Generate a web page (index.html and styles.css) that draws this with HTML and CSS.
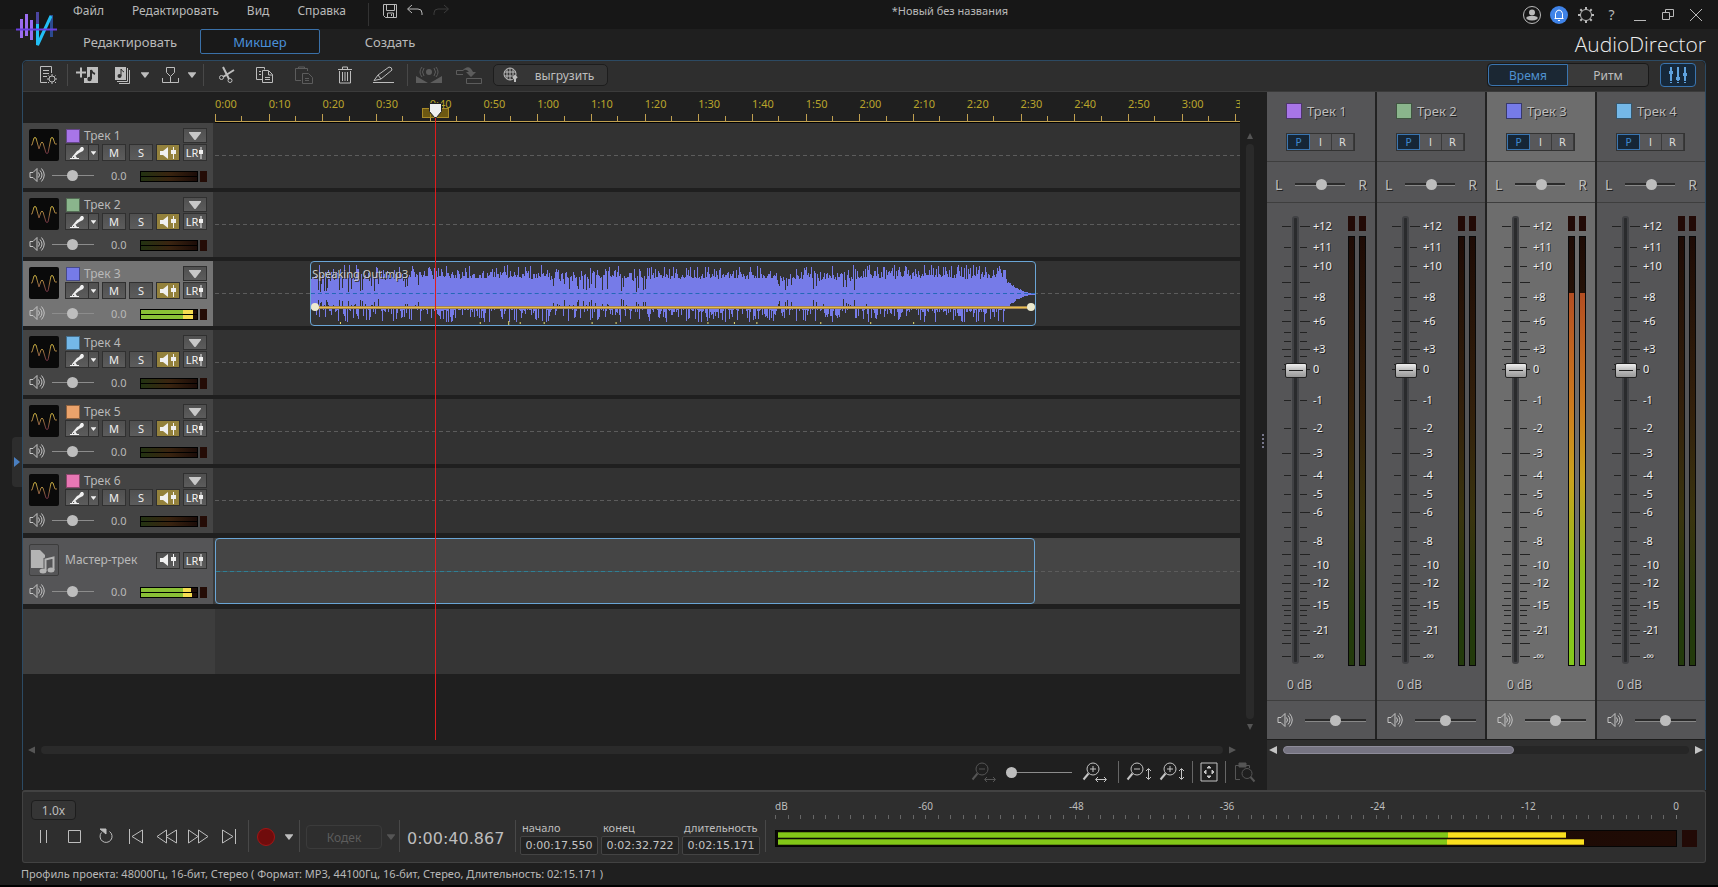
FILE: index.html
```html
<!DOCTYPE html>
<html lang="ru">
<head>
    <meta charset="UTF-8">
    <title>AudioDirector</title>
    <link rel="stylesheet" href="styles.css">
</head>
<body>
<svg class="sprite" aria-hidden="true">
    <symbol id="i-speaker" viewBox="0 0 16 16"><path d="M1 5.500h3l4-4v13l-4-4H1z M9.500 5.500q2 2.500 0 5 M11 3.500q4 4.500 0 9 M12.500 1.500q5.500 6.500 0 13"/></symbol>
    <symbol id="i-mic" viewBox="0 0 16 14"><path d="M1 12.500h9M3 12l5-5" /><path d="M8 5l2-1 2-3h2l1 2-1 2-4 2-5 4-2 0z M6 9l2 3H5z" fill="currentColor" stroke="none"/></symbol>
    <symbol id="i-fx" viewBox="0 0 18 14"><path d="M1 5h3l5-4v12L4 9H1z" fill="currentColor" stroke="none"/><path d="M14.500 1v12" stroke-width="1"/><path d="M12 4h5v4h-5z" fill="currentColor" stroke="none"/></symbol>
    <symbol id="i-knob" viewBox="0 0 6 14"><path d="M3 1v12"/><path d="M1 4h4v4H1z" fill="currentColor" stroke="none"/></symbol>
    <symbol id="i-down" viewBox="0 0 12 8"><path d="M0 0h12v1L6.500 8h-1L0 1z" fill="currentColor" stroke="none"/></symbol>
    <symbol id="i-left" viewBox="0 0 8 8"><path d="M8 0v8L0 4z" fill="currentColor" stroke="none"/></symbol>
    <symbol id="i-right" viewBox="0 0 8 8"><path d="M0 0v8l8-4z" fill="currentColor" stroke="none"/></symbol>
    <symbol id="i-up" viewBox="0 0 8 8"><path d="M0 8h8L4 0z" fill="currentColor" stroke="none"/></symbol>
    <symbol id="i-lens" viewBox="0 0 26 20"><circle cx="11" cy="7" r="6"/><path d="M6.500 11.500l-5 6" stroke-width="2"/></symbol>
</svg>

<header class="titlebar">
    <nav class="menu">
        <a href="#">Файл</a>
        <a href="#">Редактировать</a>
        <a href="#">Вид</a>
        <a href="#">Справка</a>
    </nav>
    <div class="quick">
        <button title="Сохранить" class="save"><svg width="16" height="16"><path d="M1.500 1.500h13v13h-11l-2-2z M4.500 1.500v6h8v-6 M5.500 14v-4h6v4 M9.500 11v2"/></svg></button>
        <button title="Отменить"><svg width="18" height="14"><path d="M6 1L1.500 5 6 9 M2 5h10q4 0 4 4v2"/></svg></button>
        <button title="Повторить" class="dim"><svg width="18" height="14"><path d="M12 1l4.500 4L12 9 M16 5H6q-4 0-4 4v2"/></svg></button>
    </div>
    <div class="doc-title">*Новый без названия</div>
    <div class="window-tools">
        <button title="Профиль"><svg width="20" height="20"><circle cx="10" cy="10" r="8.500"/><path d="M4.500 14v-2l3-1h5l3 1v2q-5.500 3-11 0z" fill="currentColor" stroke="none"/><circle cx="10" cy="7.500" r="3" fill="currentColor" stroke="none"/></svg></button>
        <button title="Уведомления"><svg width="20" height="20"><circle cx="10" cy="10" r="9" fill="#3f83e8" stroke="none"/><path d="M5.500 13.500h9M6.500 13V8.500q.5-3 3.500-3.500 3 .5 3.500 3.500V13M9 15.500h2" stroke="#fff"/></svg></button>
        <button title="Настройки"><svg width="18" height="18"><circle cx="9" cy="9" r="5.500"/><path d="M9 1v2.500M9 14.500V17M1 9h2.500M14.500 9H17M3.300 3.300L5 5M13 13l1.700 1.700M14.700 3.300L13 5M5 13l-1.700 1.700" stroke-width="2"/></svg></button>
        <button title="Помощь" class="help">?</button>
        <button title="Свернуть"><svg width="14" height="14"><path d="M1 12.500h12"/></svg></button>
        <button title="Окно"><svg width="14" height="14"><path d="M1.500 4.500h7v7h-7z M4.500 4V1.500h8v7H9"/></svg></button>
        <button title="Закрыть"><svg width="14" height="14"><path d="M1 1l12 12M13 1L1 13"/></svg></button>
    </div>
</header>

<div class="modes">
    <svg class="logo" width="42" height="36" viewBox="0 0 42 36">
        <path d="M5.500 7v19M10.500 2v22M15.500 8v20" stroke="#9a6cf0" stroke-width="3"/>
        <path d="M21.500 0v12" stroke="#4b45a0" stroke-width="3"/><path d="M35.500 3v22" stroke="#2c4a90" stroke-width="3"/>
        <path d="M21.500 12v21L35 4" stroke="#22bff5" stroke-width="3"/>
        <path d="M0 17.500h41" stroke="#6a3fe0" stroke-width="2"/>
    </svg>
    <button class="mode">Редактировать</button>
    <button class="mode active">Микшер</button>
    <button class="mode">Создать</button>
    <div class="brand">AudioDirector</div>
</div>

<div class="workspace">
    <button class="side-tab" title="Показать панель"><svg width="6" height="10" viewBox="0 0 6 10"><path d="M0 0v10l6-5z" fill="#4a7fc0" stroke="none"/></svg></button>
    <div class="shell">
        <div class="toolbar">
            <button title="Параметры"><svg width="20" height="20"><path d="M9 17.500H2.500v-16h11V8M5 5.500h6M5 8.500h6M5 11.500h4"/><circle cx="14" cy="14" r="3"/><path d="M14 9v2M14 17v2M9 14h2M17 14h2M10.500 10.500l1 1M17 17l1 1M17.500 10.500l-1 1M11 17l-1 1"/></svg></button>
            <i class="sep"></i>
            <button title="Добавить"><svg width="24" height="18"><path d="M1 6.500h10M6 1.500v10" stroke-width="2"/><path d="M12 1h11v16H9v-5h3z" fill="currentColor" stroke="none"/><path d="M16 13V4q1 3 4 4" stroke="#2e2e2e" stroke-width="2"/><circle cx="14.500" cy="13" r="2.200" fill="#2e2e2e" stroke="none"/></svg></button>
            <button title="Библиотека" class="library"><svg width="17" height="18"><path d="M1 1h11v13H1z" fill="currentColor" stroke="none"/><path d="M3 15.500h10.500V2M5 17.500h10.500V4"/><path d="M7 10V3q1 2 3 3" stroke="#2e2e2e"/><circle cx="5.500" cy="10" r="2" fill="#2e2e2e" stroke="none"/></svg></button>
            <button title="Список" class="caret"><svg width="8" height="6"><use href="#i-down"/></svg></button>
            <button title="Маркер"><svg width="20" height="18"><path d="M5.500 1.500h8v5l-4 4-4-4z M9.500 11v5M1.500 12v4.500h16V12"/></svg></button>
            <button title="Список" class="caret"><svg width="8" height="6"><use href="#i-down"/></svg></button>
            <i class="sep"></i>
            <button title="Вырезать"><svg width="18" height="18"><path d="M5 1l6 12M16 4L5 11" stroke-width="2"/><circle cx="3.500" cy="11.500" r="2"/><circle cx="12" cy="14.500" r="2"/></svg></button>
            <button title="Копировать" class="wide"><svg width="20" height="18"><path d="M7 13.500H1.500v-12h8v2M4 5.500h2M4 8.500h2M7.500 4.500h6l4 4v8h-10z M13.500 5v4h4M10 11.500h5M10 13.500h5"/></svg></button>
            <button title="Вставить" class="wide dim"><svg width="20" height="18"><path d="M7 14.500H1.500v-12h12V5M4.500 3V1h6v2M8.500 7.500h6l4 4v6h-10z M11 12.500h4M11 14.500h4"/></svg></button>
            <button title="Удалить" class="wide trash"><svg width="16" height="18"><path d="M1 3.500h14M5.500 3V1h5v2M2.500 5v12h11V5M5.500 6v9M8 6v9M10.500 6v9"/></svg></button>
            <button title="Правка" class="wide"><svg width="24" height="18"><path d="M1 16.500h21M2 14.500l4-5.500L17 1q3 0 3 3L9 13z M6 9l3 4"/></svg></button>
            <i class="sep"></i>
            <button title="Эффект" class="fixed dim"><svg width="28" height="18"><circle cx="14" cy="6" r="3" fill="currentColor" stroke="none"/><path d="M9 2q-3 4 0 8M19 2q3 4 0 8M7 1Q3 6 7 11M21 1q4 5 0 10"/><path d="M1 17v-7l12 7zM27 17v-7l-12 7z" fill="currentColor" stroke="none"/></svg></button>
            <button title="Перенос" class="fixed dim"><svg width="28" height="18"><path d="M8 8.500H1.500v-4h7M11.500 12.500h15v5h-15z"/><path d="M7 5q7-8 11 1h3l-5 5-5-5h3Q11 2 7 5z" fill="currentColor" stroke="none"/></svg></button>
            <button class="upload"><svg width="16" height="16"><circle cx="7" cy="7" r="6"/><path d="M1 5h12M1 9h10M7 1v12M4 2v10M10 2v6"/><path d="M12 15V9M10 11l2-2 2 2" stroke-width="2"/></svg>выгрузить</button>
            <div class="units">
                <button class="active">Время</button><button>Ритм</button>
            </div>
            <button class="mixer-toggle" title="Микшер"><svg width="20" height="18"><path d="M3 1v16M10 1v16M17 1v16" stroke-width="2" stroke-dasharray="14 1"/><path d="M1 5h4v3H1zM8 11h4v3H8zM15 7h4v3h-4z" fill="currentColor" stroke="none"/></svg></button>
        </div>

        <div class="main">
            <section class="timeline">
                <div class="arrange">
                    <div class="arrange-body">
                        <div class="ruler" id="ruler"></div>
                        <div class="tracks" id="tracks"></div>
                        <div class="track master">
                            <div class="head">
                                <div class="head-top">
                                    <svg class="thumb-doc" width="30" height="32"><path d="M1 5h9l5 5v13H1z" fill="#b4b4b4" stroke="none"/><path d="M15.500 26V14.500l8-2V25" stroke="#555557" stroke-width="4"/><path d="M15.500 26V14.500l8-2V25" stroke="#b4b4b4" stroke-width="2"/><ellipse cx="13" cy="26" rx="3.500" ry="2.500" fill="#b4b4b4" stroke="none"/><ellipse cx="21" cy="25" rx="3.500" ry="2.500" fill="#b4b4b4" stroke="none"/></svg>
                                    <div class="master-info">
                                        <span class="name">Мастер-трек</span>
                                        <button class="tb" title="Эффекты"><svg width="18" height="14"><use href="#i-fx"/></svg></button>
                                        <button class="tb lr">LR<svg width="6" height="14"><use href="#i-knob"/></svg></button>
                                    </div>
                                </div>
                                <div class="head-bottom">
                                    <svg class="spk" width="16" height="16"><use href="#i-speaker"/></svg>
                                    <input type="range" class="vol" value="48" aria-label="Громкость мастер-трека">
                                    <output>0.0</output>
                                    <div class="mini on"><i style="width:89%"></i><i style="width:91%"></i></div>
                                    <b class="clip-lamp"></b>
                                </div>
                            </div>
                            <div class="lane"><div class="master-clip"></div></div>
                        </div>
                        <div class="track blank">
                            <div class="head"></div>
                            <div class="lane"></div>
                        </div>
                        <div class="overlay">
                            <div class="playhead" id="playhead">
                                <span class="range"></span>
                                <svg width="13" height="16"><path d="M.5.500h12v8l-5 6h-2l-5-6z" fill="#efefef" stroke="#222"/></svg>
                            </div>
                        </div>
                    </div>
                    <div class="vscroll">
                        <svg width="6" height="6"><use href="#i-up"/></svg>
                        <span></span>
                        <svg class="flip" width="6" height="6"><use href="#i-up"/></svg>
                    </div>
                </div>
                <div class="hscroll">
                    <svg width="7" height="8"><use href="#i-left"/></svg>
                    <span></span>
                    <svg width="7" height="8"><use href="#i-right"/></svg>
                </div>
                <div class="zoombar">
                    <button class="dim" title="Уменьшить"><svg width="26" height="20"><use href="#i-lens"/><path d="M8 7h6M14 17.500h10M16 15l-2.500 2.500L16 20M22 15l2.500 2.500L22 20"/></svg></button>
                    <input type="range" class="zoom-range" value="0" aria-label="Масштаб">
                    <button title="Увеличить"><svg width="26" height="20"><use href="#i-lens"/><path d="M8 7h6M11 4v6M14 17.500h10M16 15l-2.500 2.500L16 20M22 15l2.500 2.500L22 20"/></svg></button>
                    <i class="sep"></i>
                    <button title="Ниже"><svg width="26" height="20"><use href="#i-lens"/><path d="M8 7h6M22.500 7v10M20 9l2.500-2.500L25 9M20 15l2.500 2.500L25 15"/></svg></button>
                    <button title="Выше"><svg width="26" height="20"><use href="#i-lens"/><path d="M8 7h6M11 4v6M22.500 7v10M20 9l2.500-2.500L25 9M20 15l2.500 2.500L25 15"/></svg></button>
                    <i class="sep"></i>
                    <button title="Весь проект"><svg width="18" height="20"><path d="M1 1h16v18H1z"/><path d="M9 4l2 2H7zM9 16l2-2H7zM4 10l2-2v4zM14 10l-2-2v4z" fill="currentColor"/></svg></button>
                    <i class="sep"></i>
                    <button class="dim" title="По клипу"><svg width="24" height="20"><path d="M7 17.500H2.500v-14h14V6"/><path d="M6 1h7v4H6z" fill="currentColor"/><circle cx="14" cy="11.500" r="5"/><path d="M17.500 15l4 4.500" stroke-width="2"/></svg></button>
                </div>
            </section>
            <div class="splitter"><i></i><i></i><i></i><i></i></div>
            <section class="mixer">
                <div class="strips" id="strips"></div>
                <div class="mix-scroll">
                    <svg width="8" height="8"><use href="#i-left"/></svg>
                    <span><i></i></span>
                    <svg width="8" height="8"><use href="#i-right"/></svg>
                </div>
            </section>
        </div>
    </div>
</div>

<footer class="transport">
    <div class="player">
        <button class="speed">1.0x</button>
        <div class="play-row">
            <button title="Пауза"><svg width="16" height="16"><path d="M4.500 2v13M10.500 2v13"/></svg></button>
            <button title="Стоп"><svg width="16" height="16"><path d="M1.500 2.500h12v12h-12z"/></svg></button>
            <button title="Повтор"><svg width="16" height="16"><path d="M11.500 3.500a6 6 0 1 1-8 1"/><path d="M2 1h6v5z" fill="currentColor"/></svg></button>
            <button title="В начало"><svg width="16" height="16"><path d="M1.500 1v15M14.500 2v13L4 8.500z"/></svg></button>
            <button title="Назад"><svg width="22" height="16"><path d="M10.500 2v13L1 8.500zM20.500 2v13L10 8.500z"/></svg></button>
            <button title="Вперёд"><svg width="22" height="16"><path d="M1.500 2v13L11 8.500zM11.500 2v13L21 8.500z"/></svg></button>
            <button title="В конец"><svg width="16" height="16"><path d="M14.500 1v15M1.500 2v13L12 8.500z"/></svg></button>
        </div>
    </div>
    <i class="sep"></i>
    <div class="rec-box">
        <button class="record" title="Запись"></button>
        <button class="caret" title="Список"><svg width="8" height="6"><use href="#i-down"/></svg></button>
    </div>
    <i class="sep"></i>
    <div class="codec-box">
        <button class="codec" disabled>Кодек</button>
        <button class="caret dim" title="Список"><svg width="8" height="6"><use href="#i-down"/></svg></button>
    </div>
    <i class="sep"></i>
    <div class="clock">0:00:40.867</div>
    <i class="sep"></i>
    <div class="times">
        <label>начало<input type="text" value="0:00:17.550"></label>
        <label>конец<input type="text" value="0:02:32.722"></label>
        <label>длительность<input type="text" value="0:02:15.171"></label>
    </div>
    <i class="sep"></i>
    <div class="level">
        <div class="level-scale"><span>dB</span><span>-60</span><span>-48</span><span>-36</span><span>-24</span><span>-12</span><span>0</span></div>
        <div class="level-ticks"></div>
        <div class="level-row">
            <div class="level-bars"><i style="width:88%;--hot:85%"></i><i style="width:90%;--hot:83%"></i></div>
            <b></b>
        </div>
    </div>
</footer>
<div class="status">Профиль проекта: 48000Гц, 16-бит, Стерео ( Формат: MP3, 44100Гц, 16-бит, Стерео, Длительность: 02:15.171 )</div>
<script src="script.js"></script>
</body>
</html>
```
FILE: styles.css
```css
*{
    box-sizing: border-box;
}
body{
    margin: 0;
    min-height: 100vh;
    display: flex;
    flex-direction: column;
    background: #1f1f1f;
    color: #b9b9b9;
    font-family: "Noto Sans", "Open Sans", sans-serif;
    font-size: 12px;
    overflow: hidden;
}
button{
    display: flex;
    align-items: center;
    justify-content: center;
    flex: none;
    margin: 0;
    padding: 0;
    border: 0;
    background: none;
    color: inherit;
    font-family: inherit;
    font-size: inherit;
}
svg{
    display: block;
    flex: none;
    fill: none;
    stroke: currentColor;
    overflow: visible;
}
.sprite{
    position: absolute;
    width: 0;
    height: 0;
}
.sep{
    flex: none;
    width: 1px;
    background: #484848;
}
.dim{
    color: #555;
}

/* title bar */
.titlebar{
    display: flex;
    align-items: center;
    height: 29px;
    padding: 0 13px 0 73px;
    background: #171717;
}
.menu{
    display: flex;
    gap: 28px;
    width: 296px;
    padding-bottom: 7px;
    border-right: 1px solid #333;
    line-height: 16px;
}
.menu a{
    color: #b9b9b9;
    text-decoration: none;
}
.quick{
    display: flex;
    flex: 3 1 0;
    gap: 8px;
    padding-bottom: 7px;
}
.save{
    margin-left: 13px;
}
.quick .dim{
    color: #3c3c3c;
}
.doc-title{
    padding-bottom: 9px;
    font-size: 11px;
}
.window-tools{
    display: flex;
    flex: 4 1 0;
    align-items: center;
    justify-content: flex-end;
    gap: 7px;
}
.window-tools button{
    min-width: 19px;
}
.help{
    font-size: 14px;
}
.window-tools .help ~ button{
    margin-left: 2px;
}

/* modes */
.modes{
    display: flex;
    align-items: flex-start;
    height: 31px;
    padding: 0 12px 0 16px;
}
.logo{
    margin: -17px 12px 0 0;
}
.mode{
    width: 120px;
    height: 25px;
    border: 1px solid transparent;
    border-radius: 2px;
    font-size: 13px;
    margin-right: 10px;
}
.mode.active{
    background: #191919;
    border-color: #3a70a8;
    color: #4a90d9;
}
.brand{
    margin-left: auto;
    color: #eee;
    font-family: "Open Sans", "Noto Sans", sans-serif;
    font-size: 21px;
    font-weight: 300;
    line-height: 30px;
}

/* workspace */
.workspace{
    display: flex;
    flex: 1;
    padding: 0 12px 0 12px;
}
.side-tab{
    align-self: center;
    width: 10px;
    height: 50px;
    margin-top: 74px;
    background: #2d2d2d;
    border-radius: 4px 0 0 4px;
}
.shell{
    display: flex;
    flex: 1;
    flex-direction: column;
    min-width: 0;
    border: 1px solid #2c4a63;
    border-bottom: 0;
    border-radius: 5px 5px 0 0;
}
.toolbar{
    display: flex;
    align-items: center;
    height: 31px;
    padding: 0 9px 2px 15px;
    background: #2e2e2e;
    border-bottom: 1px solid #3b3b3b;
    border-radius: 5px 5px 0 0;
    color: #bdbdbd;
}
.toolbar .sep{
    height: 22px;
    margin: 0 7px 0 9px;
}
.toolbar .wide + .sep{
    margin-left: 11px;
}
.toolbar .caret{
    width: 22px;
}
.toolbar .caret + .sep{
    margin-left: 0;
    margin-right: 14px;
}
.toolbar button + button{
    margin-left: 3px;
}
.toolbar .caret + button{
    margin-left: 5px;
}
.toolbar button + .caret{
    margin-left: 0;
}
.toolbar button.library{
    margin-left: 15px;
    margin-right: 3px;
}
.toolbar button.wide{
    margin-left: 19px;
}
.toolbar button.trash{
    margin-left: 23px;
}
.toolbar .fixed + .fixed{
    margin-left: 12px;
}
.toolbar .fixed + .upload{
    margin-left: 10px;
}
.toolbar .dim{
    color: #5c5c5c;
}
.upload{
    height: 22px;
    width: 115px;
    padding-right: 4px;
    gap: 16px;
    background: #353535;
    border: 1px solid #1d1d1d;
    border-radius: 5px;
    font-size: 12px;
}
.units{
    display: flex;
    margin-left: auto;
    height: 24px;
    border: 1px solid #191919;
    border-radius: 4px;
}
.toolbar .units button{
    width: 80px;
    margin: 0;
    background: #3a3a3a;
    border-radius: 0 4px 4px 0;
    font-size: 12px;
}
.toolbar .units .active{
    border: 1px solid #3a75b0;
    border-radius: 4px 0 0 4px;
    background: #1b2733;
    color: #4f92d0;
}
.mixer-toggle{
    width: 36px;
    height: 24px;
    background: #16283a;
    border: 1px solid #3a75b0;
    border-radius: 4px;
    color: #5fa3df;
}
.toolbar .units + .mixer-toggle{
    margin-left: 11px;
}
.main{
    display: flex;
    flex: 1;
    min-height: 0;
}
.timeline{
    display: flex;
    flex: 1;
    flex-direction: column;
    min-width: 0;
}
.arrange{
    display: flex;
    flex: 1;
}
.arrange-body{
    position: relative;
    flex: 1;
    min-width: 0;
}
.ruler{
    display: flex;
    height: 31px;
    margin-left: 192px;
    overflow: hidden;
    border-bottom: 1px solid #000;
    box-shadow: inset 0 -1px #c0a050;
    color: #b9a42c;
    font-size: 11px;
}
.ruler span{
    flex: none;
    height: 30px;
    line-height: 24px;
    background: linear-gradient(#c0a050, #c0a050) 0 100% / 1px 8px no-repeat, linear-gradient(#c0a050, #c0a050) 50% 100% / 1px 6px no-repeat;
}
.tracks{
    padding-bottom: 1px;
}
.track{
    display: flex;
    height: 65px;
    margin-bottom: 4px;
}
.head{
    width: 190px;
    padding: 5px 6px 0;
    background: #444;
}
.track.selected .head{
    background: #747474;
}
.lane{
    position: relative;
    flex: 1;
    border-left: 2px solid #323232;
    background: repeating-linear-gradient(90deg, #5c5c5c 0 4px, transparent 4px 7px) 0 50% / 100% 1px no-repeat, #323232;
}
.head-top{
    display: flex;
    gap: 6px;
}
.wave-thumb{
    background: #0a0a0a;
    border-radius: 2px;
    margin-top: 1px;
}
.head-info{
    flex: 1;
}
.name-row{
    display: flex;
    align-items: flex-start;
    height: 16px;
}
.swatch{
    width: 14px;
    height: 14px;
    margin: 1px 4px 0 1px;
    border: 1px solid #00000066;
}
.name{
    flex: 1;
    line-height: 16px;
}
.tb{
    width: 24px;
    height: 17px;
    background: linear-gradient(#505050, #5c5c5c);
    border: 1px solid #303030;
    color: #f0f0f0;
    font-size: 11px;
}
.tb.drop{
    height: 15px;
    color: #c8c8c8;
}
.tb.fx-on{
    background: #93813c;
}
.tb-row{
    display: flex;
    gap: 3px;
}
.mic-group{
    display: flex;
    width: 34px;
}
.mic-group .tb + .tb{
    width: 11px;
    margin-left: -1px;
}
.head-bottom{
    display: flex;
    align-items: center;
    height: 16px;
    margin-top: 6px;
}
.spk{
    color: #c4c4c4;
}
input[type=range]{
    appearance: none;
    margin: 0;
    background: none;
    flex: none;
}
input[type=range]::-webkit-slider-runnable-track{
    height: 1px;
    background: #8c8c8c;
}
input[type=range]::-webkit-slider-thumb{
    appearance: none;
    width: 11px;
    height: 11px;
    margin-top: -5px;
    border-radius: 50%;
    background: #bdbdbd;
}
.head-bottom .vol{
    width: 42px;
    height: 12px;
    margin: 0 17px 0 7px;
}
.head-bottom output{
    width: 29px;
    font-size: 11px;
}
.mini{
    display: flex;
    flex-direction: column;
    justify-content: space-between;
    width: 58px;
    height: 11px;
    margin-top: 2px;
    border: 1px solid #000;
    background: linear-gradient(90deg, #233312, #3a2410 50%, #1c0c08);
}
.mini i{
    height: 4px;
    background: linear-gradient(#8ac036, #8ac036) 0 0 / 42px 4px no-repeat, #f4dc50;
}
.mini::before{
    content: "";
    order: 1;
    height: 1px;
    margin: auto 0;
    background: #000;
}
.mini.on::before{
    margin: 0;
}
.mini i + i{
    order: 2;
}
.clip-lamp{
    width: 7px;
    height: 11px;
    margin: 2px 0 0 2px;
    background: #240c06;
}
.clip{
    position: absolute;
    top: 0;
    bottom: 0;
    margin-left: 1px;
    border: 1px solid #6aa5d5;
    border-radius: 4px;
    overflow: hidden;
}
.clip svg{
    width: 100%;
    height: 100%;
    shape-rendering: crispEdges;
}
.clip-name{
    position: absolute;
    top: 2px;
    left: 0;
    padding: 0 1px;
    color: #ccc;
    font-size: 11px;
    line-height: 20px;
    text-shadow: 1px 1px #333;
}
.gain{
    position: absolute;
    left: 4px;
    right: 4px;
    top: 44px;
    height: 3px;
    background: #e8be4c;
    border-top: 1px solid #a58650;
    border-bottom: 1px solid #a58650;
}
.gain::before, .gain::after{
    content: "";
    position: absolute;
    top: -4px;
    left: -4px;
    width: 8px;
    height: 8px;
    border-radius: 50%;
    background: #eceace;
}
.gain::after{
    left: auto;
    right: -4px;
}
.master{
    height: 66px;
    margin-bottom: 5px;
}
.master .head{
    padding-top: 6px;
    background: #555557;
}
.master .lane{
    background-color: #454545;
    border-color: #3a3a3a;
}
.thumb-doc{
    border: 1px solid #3c3c3c;
    border-radius: 2px;
}
.master-info{
    display: flex;
    flex: 1;
    align-items: center;
    gap: 3px;
}
.master .head-bottom{
    margin-top: 7px;
}
.master-clip{
    width: 80%;
    height: 66px;
    border: 1px solid #6aa5d5;
    border-radius: 4px;
    background: repeating-linear-gradient(90deg, #2f7f94 0 4px, #3d5c66 4px 7px) 0 50% / 100% 1px no-repeat;
}
.blank .head{
    width: 192px;
    background: #3d3d3d;
}
.blank .lane{
    background: #353535;
    border: 0;
}
.overlay{
    position: absolute;
    top: 11px;
    bottom: 0;
    left: 193px;
    right: 0;
    pointer-events: none;
}
.playhead{
    position: absolute;
    top: 0;
    bottom: 0;
    width: 1px;
    background: #e01c1c;
}
.playhead svg{
    position: absolute;
    top: 0;
    left: -6px;
}
.playhead .range{
    position: absolute;
    top: 5px;
    left: -13px;
    width: 27px;
    height: 10px;
    background: #93750caa;
    border: 1px solid #a88a28;
}
.vscroll{
    display: flex;
    flex-direction: column;
    align-items: center;
    gap: 5px;
    width: 20px;
    padding: 41px 0 10px;
    color: #555;
}
.vscroll span{
    flex: 1;
    width: 8px;
    border-radius: 4px;
    background: #2a2a2a;
}
.flip{
    transform: rotate(180deg);
}
.hscroll{
    display: flex;
    align-items: center;
    gap: 6px;
    height: 20px;
    padding: 0 24px 0 5px;
    color: #555;
}
.hscroll span{
    flex: 1;
    height: 8px;
    border-radius: 4px;
    background: #2a2a2a;
}
.zoombar{
    display: flex;
    align-items: center;
    justify-content: flex-end;
    gap: 7px;
    height: 24px;
    margin-bottom: 6px;
    padding-right: 3px;
    color: #c4c4c4;
}
.zoombar .sep{
    height: 22px;
    background: #666;
}
.zoom-range{
    width: 66px;
    height: 12px;
}
.zoombar .zoom-range{
    margin: 0 3px 0 2px;
}
.zoombar .zoom-range + button{
    margin-right: 3px;
}
.splitter{
    display: flex;
    flex-direction: column;
    justify-content: center;
    gap: 2px;
    width: 7px;
    padding-left: 2px;
}
.splitter i{
    width: 2px;
    height: 2px;
    background: #77778a;
}

/* mixer */
.mixer{
    display: flex;
    flex-direction: column;
    width: 438px;
    background: #2e2e2e;
}
.strips{
    display: flex;
    flex: 1;
    gap: 2px;
    background: #222;
}
.strip{
    display: flex;
    flex: 1;
    flex-direction: column;
    background: #555557;
    color: #bdbdbd;
    text-shadow: 1px 1px #222;
}
.strip.selected{
    background: #6d6d6d;
}
.strip-top{
    height: 70px;
    padding: 11px 19px 0;
    border-bottom: 1px solid #3e3e3e;
}
.strip-title{
    display: flex;
    align-items: center;
    gap: 5px;
    height: 16px;
    font-size: 13px;
}
.strip-title i{
    width: 16px;
    height: 16px;
    border: 1px solid #00000088;
}
.pir{
    display: flex;
    width: 69px;
    height: 18px;
    margin-top: 14px;
    border: 1px solid #333;
    background: #58585a;
}
.pir button{
    flex: 1;
    border-right: 1px solid #3a3a3a;
    font-family: "DejaVu Sans", sans-serif;
    font-size: 10px;
    color: #ddd;
}
.pir .active{
    background: #162636;
    border: 1px solid #3a75b0;
    color: #3f86cc;
}
.pan{
    display: flex;
    align-items: center;
    justify-content: space-between;
    height: 41px;
    padding: 4px 8px 0;
    border-bottom: 1px solid #3e3e3e;
    font-size: 14px;
}
.strip .pan input, .strip .send input{
    width: 50px;
    height: 12px;
}
.strip .pan input::-webkit-slider-runnable-track, .strip .send input::-webkit-slider-runnable-track{
    height: 3px;
    background: linear-gradient(#2a2a2a 2px, #888 2px);
}
.strip .pan input::-webkit-slider-thumb, .strip .send input::-webkit-slider-thumb{
    margin-top: -4px;
}
.fader-area{
    display: grid;
    grid-template-columns: 63px 7px 7px;
    column-gap: 4px;
    padding: 13px 0 0 14px;
    height: 464px;
}
.scale{
    grid-area: 1 / 1;
    width: 60px;
    height: 450px;
    font-size: 11px;
}
.scale text{
    fill: #f0f0f0;
    stroke: none;
}
.scale .ticks{
    stroke: #222;
}
.scale .groove{
    fill: #2a2b2d;
    stroke: #404144;
    stroke-width: 2px;
}
input[type=range].fader{
    grid-area: 1 / 1;
    writing-mode: vertical-lr;
    direction: rtl;
    width: 22px;
    height: 448px;
    margin-left: 4px;
}
input[type=range].fader::-webkit-slider-runnable-track{
    width: 22px;
    height: 448px;
    background: none;
}
input[type=range].fader::-webkit-slider-thumb{
    width: 22px;
    height: 15px;
    margin: 0;
    border: 1px solid #222;
    border-radius: 2px;
    background: linear-gradient(#0000 6px, #222 6px 7px, #0000 7px) 50% 0 / 14px 100% no-repeat, linear-gradient(#eee, #bbb 50%, #999);
}
.tower{
    display: flex;
    flex-direction: column;
    gap: 5px;
    height: 450px;
}
.tower b{
    height: 15px;
    background: #220a06;
}
.tower div{
    display: flex;
    flex: 1;
    align-items: flex-end;
    border: 1px solid #080808;
    background: linear-gradient(#1e0b05, #33200c 40%, #3a340f 65%, #233a0c 90%);
}
.tower div i{
    width: 100%;
    background: linear-gradient(#b34e22, #cc7a1e 30%, #c9a21e 50%, #8fbd1c 75%, #83c91c);
}
.gain-label{
    height: 34px;
    padding: 10px 0 0 20px;
    border-bottom: 1px solid #3e3e3e;
    line-height: 16px;
}
.send{
    display: flex;
    align-items: center;
    gap: 12px;
    height: 38px;
    padding-left: 10px;
}
.strip .send input{
    width: 61px;
}
.mix-scroll{
    display: flex;
    align-items: flex-start;
    gap: 6px;
    height: 51px;
    padding: 6px 2px;
    border-top: 1px solid #1c1c1c;
    color: #c4c4c4;
}
.mix-scroll span{
    flex: 1;
    height: 8px;
    background: #262626;
    border-radius: 4px;
}
.mix-scroll i{
    display: block;
    width: 57%;
    height: 8px;
    border: 1px solid #8d8b99;
    border-radius: 4px;
    background: #767482;
}

/* transport */
.transport{
    display: flex;
    height: 73px;
    margin: 0 12px 0 22px;
    padding: 8px 8px 0;
    background: #2e2e2e;
    border: 1px solid #424242;
    border-top: 2px solid #424242;
    border-radius: 3px;
    color: #bdbdbd;
}
.transport > .sep{
    height: 32px;
    margin-top: 20px;
}
.player{
    width: 217px;
}
.speed{
    width: 45px;
    height: 20px;
    background: #353535;
    border: 1px solid #1d1d1d;
    border-radius: 4px;
}
.play-row{
    display: flex;
    align-items: center;
    justify-content: space-between;
    height: 32px;
    padding: 0 8px 0 2px;
}
.play-row button{
    width: 22px;
}
.rec-box, .codec-box{
    display: flex;
    align-items: center;
    height: 32px;
    margin-top: 21px;
}
.rec-box{
    width: 50px;
    padding-left: 8px;
    gap: 10px;
}
.record{
    width: 18px;
    height: 18px;
    border: 1px solid #a31515;
    border-radius: 50%;
    background: #700c0c;
}
.codec-box{
    width: 99px;
    padding-left: 6px;
    gap: 5px;
}
.codec{
    width: 76px;
    height: 24px;
    border: 1px solid #3b3b3b;
    border-radius: 4px;
    color: #5c5c5c;
}
.clock{
    width: 115px;
    margin-top: 21px;
    padding-left: 7px;
    font-family: "DejaVu Sans", sans-serif;
    font-size: 16px;
    line-height: 36px;
}
.times{
    display: flex;
    gap: 3px;
    width: 249px;
    margin-top: 20px;
    padding-left: 4px;
}
.times label{
    width: 78px;
    text-indent: 2px;
    font-size: 11px;
    line-height: 15px;
}
.times input{
    display: block;
    width: 78px;
    height: 19px;
    margin-top: 1px;
    padding: 0;
    background: #232323;
    border: 1px solid #444;
    border-radius: 2px;
    color: #c4c4c4;
    font-family: "DejaVu Sans", sans-serif;
    font-size: 11px;
    text-align: center;
}
.level{
    flex: 1;
    padding-left: 9px;
}
.level-scale{
    display: flex;
    margin-right: 18px;
    font-size: 10px;
    line-height: 12px;
}
.level-scale span{
    flex: 2;
    text-align: center;
}
.level-scale span:first-child{
    flex: 1;
    text-align: left;
}
.level-scale span:last-child{
    flex: 1;
    text-align: right;
}
.level-ticks{
    height: 4px;
    margin: 3px 20px 11px 0;
    border-right: 1px solid #777;
    background: repeating-linear-gradient(90deg, #666 0 1px, transparent 1px calc(100% / 72));
}
.level-row{
    display: flex;
    gap: 5px;
}
.level-row b{
    width: 15px;
    height: 17px;
    background: #220a06;
}
.level-bars{
    display: grid;
    flex: 1;
    gap: 1px;
    height: 17px;
    padding: 1px 2px;
    background: linear-gradient(90deg, #0c0805, #200b05);
    border: 1px solid #050505;
}
.level-bars i{
    background: linear-gradient(90deg, #83c718 var(--hot), #fbdf1f var(--hot));
    box-shadow: inset 0 1px #0004, inset 0 -1px #0004;
}
.status{
    height: 24px;
    padding-left: 21px;
    border-bottom: 2px solid #000;
    font-size: 11px;
    line-height: 22px;
}
```
FILE: script.js
```js
var SVG_SPK = '<svg class="spk" width="16" height="16"><use href="#i-speaker"/></svg>'
var PERCENT_PER_SECOND = 0.524
var tracks = [
    {name: "Трек 1", color: "#a875e8"},
    {name: "Трек 2", color: "#8ab58c"},
    {name: "Трек 3", color: "#767be8", selected: true},
    {name: "Трек 4", color: "#74b8e8"},
    {name: "Трек 5", color: "#eba36b"},
    {name: "Трек 6", color: "#e877b4"}
]

// y, long tick, label
var scale = [
    [10, 1, "+12"], [31, 0, "+11"], [50, 0, "+10"], [66, 1], [81, 0, "+8"], [94, 0], [105, 1, "+6"],
    [116, 0], [125, 0], [133, 1, "+3"], [140, 0], [148, 0], [153, 1, "0"], [184, 0, "-1"], [212, 0, "-2"],
    [237, 1, "-3"], [259, 0, "-4"], [278, 0, "-5"], [296, 1, "-6"], [311, 0], [325, 0, "-8"], [338, 1],
    [349, 0, "-10"], [359, 0], [367, 1, "-12"], [375, 0], [382, 0], [389, 1, "-15"], [394, 0], [399, 0],
    [407, 0], [414, 1, "-21"], [419, 0], [427, 1], [440, 1, "-∞"]
]

function drawRuler() {
    var html = ""
    for (let i = 0; i < 20; i++) {
        html += '<span style="width:' + PERCENT_PER_SECOND * 10 + '%">' + Math.floor(i / 6) + ":" + (i % 6) + "0</span>"
    }
    document.getElementById("ruler").innerHTML = html
    document.getElementById("playhead").style.left = 40.867 * PERCENT_PER_SECOND + "%"
}

function wavePath() {
    var seed = 11
    function rnd() {
        seed = (seed * 16807) % 2147483647
        return seed / 2147483647
    }
    // [from, to] pieces where the music has pauses between beats
    var sparse = [[0, 112], [238, 336], [466, 562]]
    var top = ""
    var bottom = ""
    for (let x = 0; x < 725; x++) {
        let up = 15 + rnd() * 5
        let down = 12 + rnd() * 6
        if (rnd() > 0.55) up += rnd() * 11
        if (rnd() > 0.5) down += rnd() * 13
        if (sparse.some(p => x > p[0] && x < p[1])) {
            let r = rnd()
            if (r > 0.85) { up = 2 + rnd() * 8; down = 5 + rnd() * 6 }
            else if (r > 0.45) { up -= 2; down -= 2 }
        }
        if (x > 693) {
            let k = Math.max(0, (722 - x) / 28)
            up = 1 + (x < 696 ? 22 : 13 * k * k) + rnd() * 3 * k
            down = 1 + 13 * k * k + rnd() * 3 * k
        }
        top += "V" + Math.round(32 - Math.min(up, 29)) + "H" + (x + 1)
        bottom = "H" + (x + 1) + "V" + Math.round(32 + Math.min(down, 28)) + bottom
    }
    return "M0 32" + top + "V32" + bottom + "H0z"
}

function drawTracks() {
    var html = ""
    tracks.forEach(function (t) {
        var meter = t.selected ? '<div class="mini on"><i style="width:92%"></i><i style="width:92%"></i></div>' : '<div class="mini"></div>'
        var clip = ""
        if (t.selected) {
            clip = '<div class="clip" style="left:' + 17.55 * PERCENT_PER_SECOND + '%;width:' + 135.171 * PERCENT_PER_SECOND + '%">' +
                '<svg viewBox="0 0 725 63" preserveAspectRatio="none"><path d="' + wavePath() + '" fill="#767be8" stroke="none"/>' +
                '<path d="M0 31.500H725" stroke="#2468b8" stroke-dasharray="4 3"/>' +
                '<path d="M29.500 60v2M169.500 60v2M198 59v4M209.500 60v2M233.500 60v2M281.500 60v2M305.500 60v2M397.500 60v2M424 60v2M446.500 60v2M510.500 60v2M560.500 60v2M603.500 60v2" stroke="#e8e070"/></svg>' +
                '<div class="clip-name">Speaking Out.mp3</div><div class="gain"></div></div>'
        }
        html += '<div class="track' + (t.selected ? " selected" : "") + '"><div class="head"><div class="head-top">' +
            '<svg class="wave-thumb" width="30" height="32"><path d="M2 16h1l2-7q1-1 2 0l3 11 2-6 1-1 1 1 3 10q1 1 2 0l3-15q1-1 2 0l2 6h2" stroke="url(#wg)"/></svg>' +
            '<div class="head-info"><div class="name-row"><i class="swatch" style="background:' + t.color + '"></i><span class="name">' + t.name + '</span>' +
            '<button class="tb drop" title="Свернуть"><svg width="12" height="8"><use href="#i-down"/></svg></button></div>' +
            '<div class="tb-row"><div class="mic-group"><button class="tb" title="Запись"><svg width="16" height="14"><use href="#i-mic"/></svg></button>' +
            '<button class="tb" title="Вход"><svg width="5" height="4"><use href="#i-down"/></svg></button></div>' +
            '<button class="tb">M</button><button class="tb">S</button>' +
            '<button class="tb fx-on" title="Эффекты"><svg width="18" height="14"><use href="#i-fx"/></svg></button>' +
            '<button class="tb lr">LR<svg width="6" height="14"><use href="#i-knob"/></svg></button></div></div></div>' +
            '<div class="head-bottom">' + SVG_SPK + '<input type="range" class="vol" value="48" aria-label="Громкость ' + t.name + '">' +
            '<output>0.0</output>' + meter + '<b class="clip-lamp"></b></div></div><div class="lane">' + clip + '</div></div>'
    })
    document.getElementById("tracks").innerHTML = '<svg class="sprite"><linearGradient id="wg" x2="0" y2="1"><stop stop-color="#c8b040"/><stop offset="1" stop-color="#6a3040"/></linearGradient></svg>' + html
}

function drawScale() {
    var ticks = ""
    var labels = ""
    scale.forEach(function (s) {
        var y = s[0] + 0.5
        ticks += s[1] ? "M1 " + y + "H10M19 " + y + "H29" : "M3 " + y + "H10M19 " + y + "H26"
        if (s[2]) labels += '<text x="32" y="' + (s[0] + 4) + '">' + s[2] + "</text>"
    })
    return '<svg class="scale"><path class="ticks" d="' + ticks + '"/><rect class="groove" x="12" y="1" width="5" height="446" rx="2"/>' + labels + "</svg>"
}

function drawStrips() {
    var html = ""
    tracks.slice(0, 4).forEach(function (t) {
        var towers = [87, 87].map(function (v) {
            return "<div class=\"tower\"><b></b><div>" + (t.selected ? '<i style="height:' + v + '%"></i>' : "") + "</div></div>"
        }).join("")
        html += '<div class="strip' + (t.selected ? " selected" : "") + '"><div class="strip-top">' +
            '<div class="strip-title"><i style="background:' + t.color + '"></i>' + t.name + '</div>' +
            '<div class="pir"><button class="active">P</button><button>I</button><button>R</button></div></div>' +
            '<div class="pan">L<input type="range" value="52" aria-label="Панорама ' + t.name + '">R</div>' +
            '<div class="fader-area">' + drawScale() + '<input type="range" class="fader" value="66" aria-label="Уровень ' + t.name + '">' + towers + '</div>' +
            '<div class="gain-label">0 dB</div>' +
            '<div class="send">' + SVG_SPK + '<input type="range" value="50" aria-label="Громкость ' + t.name + '"></div></div>'
    })
    document.getElementById("strips").innerHTML = html
}

drawRuler()
drawTracks()
drawStrips()
```
